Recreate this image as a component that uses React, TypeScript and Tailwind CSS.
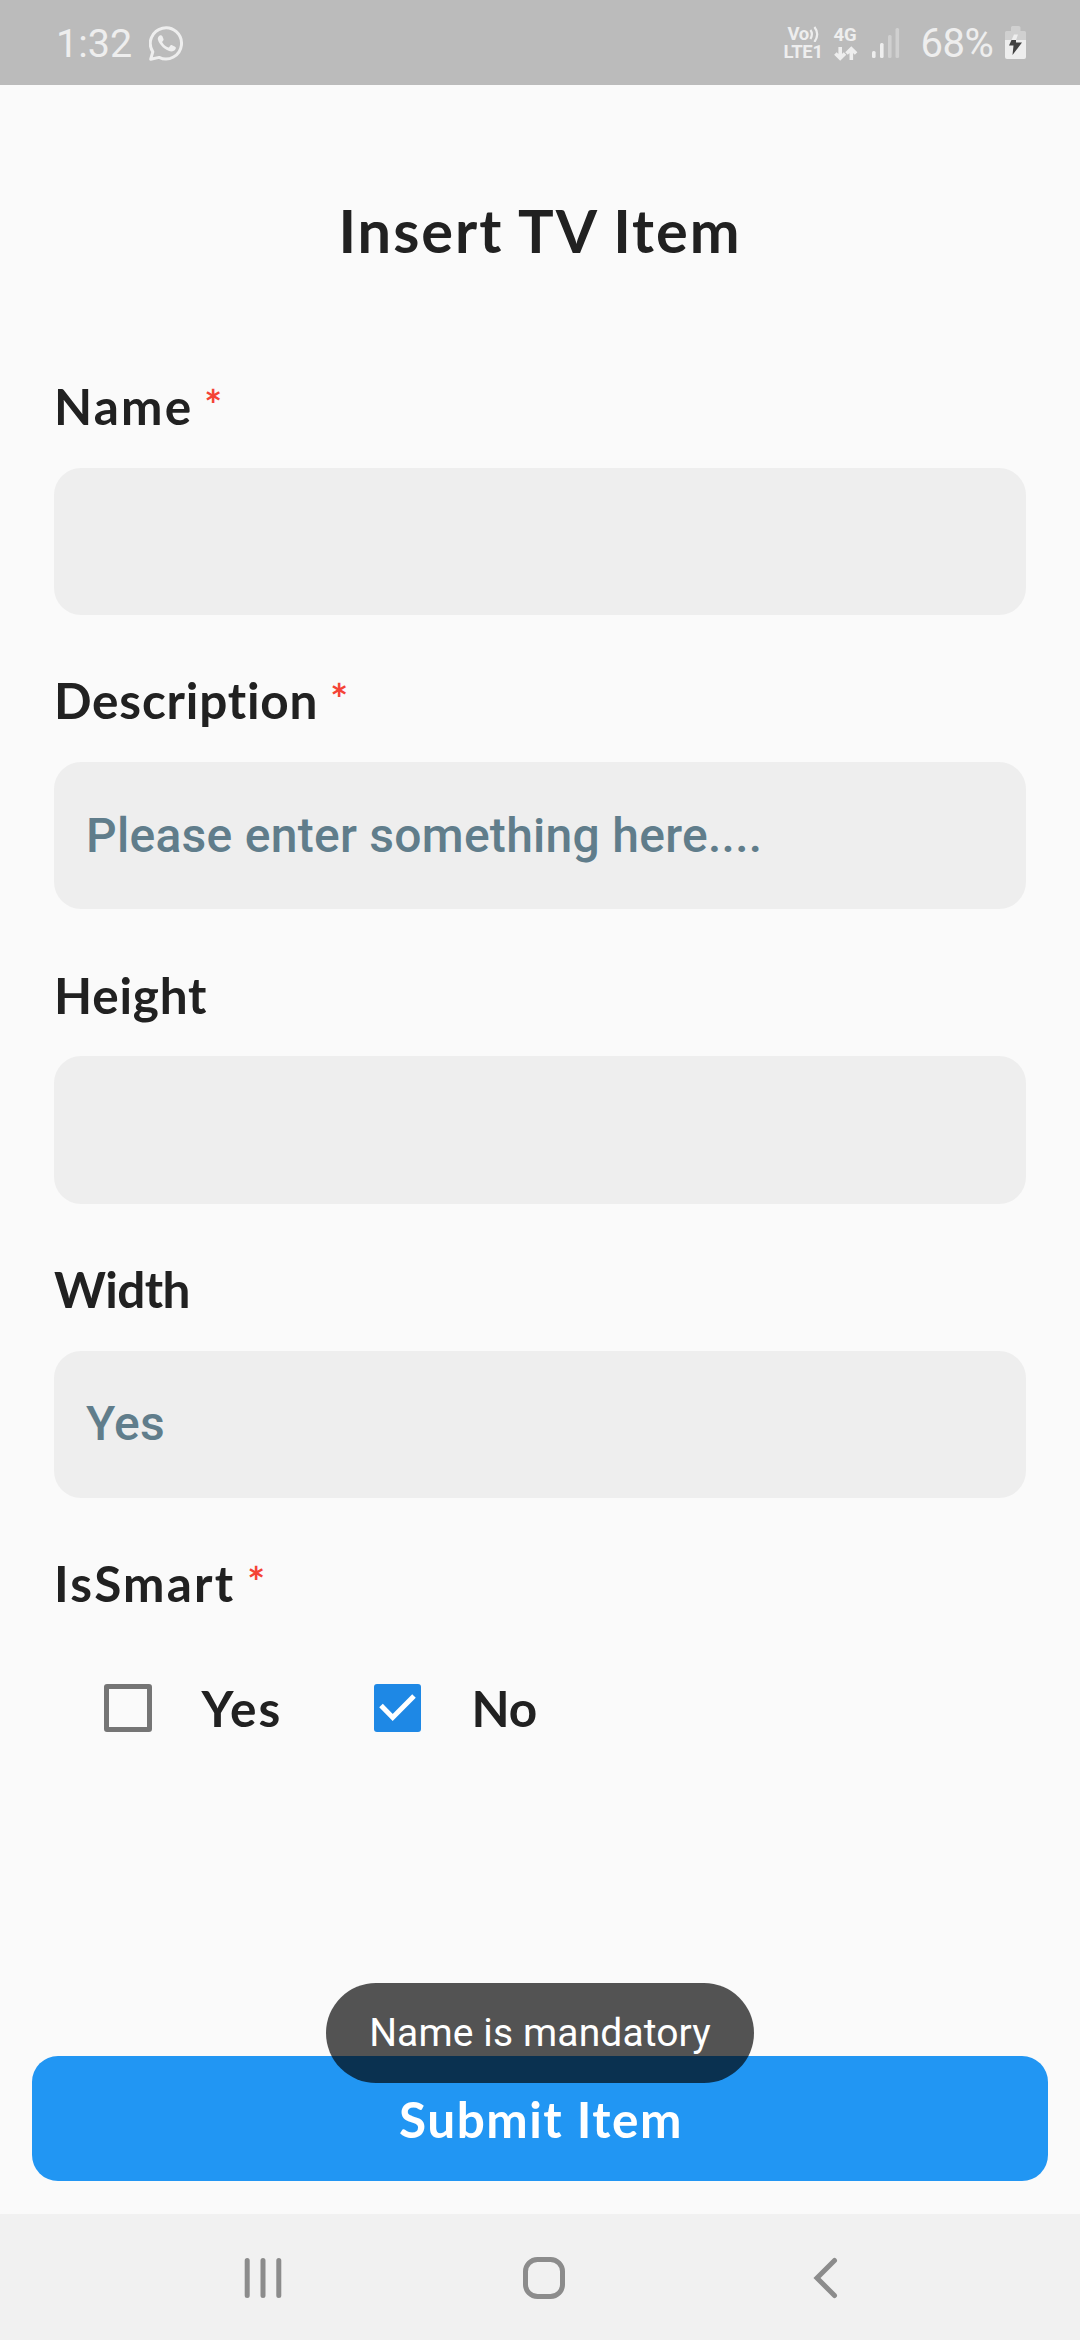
import React from "react";

type FieldProps = {
  label: string;
  required?: boolean;
  value?: string;
  spacing: string;
  starGap?: string;
};

const labelFont =
  "font-['Lato',sans-serif] font-bold text-[49.5px] leading-[60px] text-[#212121] whitespace-pre [font-variant-ligatures:none]";

function Label({ label, required, spacing, starGap }: FieldProps) {
  return (
    <div className="flex h-[60px] items-start">
      <span className={`${labelFont} ${spacing}`}>{label}</span>
      {required && <Star gap={starGap ?? ""} />}
    </div>
  );
}

function Star({ gap }: { gap: string }) {
  return (
    <span
      className={`font-['Lato',sans-serif] text-[42px] font-bold leading-[59px] text-[#f44336] ${gap}`}
    >
      *
    </span>
  );
}

function Field(props: FieldProps) {
  return (
    <div className="flex h-[294.3px] flex-col">
      <Label {...props} />
      <div className="mt-[31.7px] flex h-[147.3px] items-center rounded-[27px] bg-[#eeeeee] pl-8">
        <span className="font-['Roboto',sans-serif] text-[48px] font-medium leading-[56px] tracking-[0.27px] text-[#607d8b]">
          {props.value}
        </span>
      </div>
    </div>
  );
}

function WhatsApp() {
  return (
    <svg width="35" height="35" viewBox="0 0 35 35" fill="none">
      <path
        d="M1.7 33.2 3.8 25.8A15.6 15.6 0 1 1 10.1 31.4Z"
        stroke="#eeeeee"
        strokeWidth="3"
        strokeLinejoin="round"
      />
      <path
        d="M10.7 9.4c1.1-.5 2.2-.2 2.7.8l1.1 2.8c.3.8-.2 1.5-.9 2.3-.5.6-.5.9-.1 1.5 1.3 2 3.1 3.5 5.3 4.5.6.3 1 .2 1.5-.4l1.1-1.4c.5-.6 1-.6 1.7-.3l3 1.5c.9.5.9 1 .6 2-.6 1.8-2.6 2.8-4.4 2.8-5.5-.4-12.5-6.9-13.5-12.2-.2-1.5.5-3.2 1.9-3.9Z"
        fill="#eeeeee"
      />
    </svg>
  );
}

function StatusBar() {
  return (
    <header className="flex h-[84.7px] shrink-0 items-start bg-[#bbbbbb] font-['Roboto',sans-serif] text-[#eeeeee]">
      <span className="ml-[56px] mt-[20px] w-[92.5px] text-[39.5px] leading-[48px]">1:32</span>
      <div className="mt-[26px]">
        <WhatsApp />
      </div>
      <div className="ml-[600px] mt-[25px] flex w-[41px] flex-col text-[18.5px] font-bold leading-[18px]">
        <div className="flex h-[17px] items-start pl-[4px]">
          <span className="tracking-[-0.5px]">Vo</span>
          <svg width="12" height="17" viewBox="0 0 12 17" fill="none" stroke="#eeeeee" strokeWidth="2.2">
            <path d="M1.4 5q3 4 0 9M5.4 2q5.6 7 0 15" />
          </svg>
        </div>
        <span className="mt-[1px] tracking-[-0.3px]">LTE1</span>
      </div>
      <div className="ml-[9px] mt-[26px] flex w-[25px] flex-col text-[18.5px] font-bold leading-[18px]">
        <span>4G</span>
        <svg className="mt-[2px]" width="24" height="15" viewBox="0 0 24 15" fill="none" stroke="#eeeeee" strokeWidth="3.6">
          <path d="M6.2 1v11M1.4 7.5l4.8 4.8L11 7.5M17.3 14V3M12.5 7.5 17.3 2.7l4.8 4.8" />
        </svg>
      </div>
      <svg className="ml-[12px] mt-[27px]" width="30" height="32" viewBox="0 0 30 32">
        <rect x="1" y="24" width="3.6" height="7" rx="1.5" fill="#eeeeee" />
        <rect x="9" y="16" width="3.6" height="15" rx="1.5" fill="#eeeeee" />
        <rect x="17" y="8" width="3.6" height="23" rx="1.5" fill="#d0d0d0" />
        <rect x="24.5" y="1" width="3.6" height="30" rx="1.5" fill="#d0d0d0" />
      </svg>
      <span className="ml-[20px] mt-[20px] w-[84px] text-[40px] leading-[48px] tracking-[-0.5px]">68%</span>
      <svg width="22" height="34" viewBox="0 0 22 34" className="mt-[26px]">
        <path d="M6 5V1.5Q6 0 7.5 0h6Q15.5 0 15.5 1.5V5H19.5Q21 5 21 6.5V14H0V6.5Q0 5 1.5 5Z" fill="#d0d0d0" />
        <path d="M0 14h21v17q0 2-2 2H2q-2 0-2-2Z" fill="#eeeeee" />
        <path d="M9 8.5h4L11 14H6.5Z" fill="#eeeeee" />
        <path d="M6.5 14H11v2.5h6L7.5 29l1-9.5H4Z" fill="#424242" />
      </svg>
    </header>
  );
}

export default function App() {
  return (
    <div className="flex h-[2340px] w-[1080px] flex-col overflow-hidden bg-[#fafafa]">
      <StatusBar />
      <main className="relative flex h-[2129px] flex-col">
        <h1 className="mt-[109.3px] h-[72px] text-center font-['Lato',sans-serif] text-[59.5px] font-bold leading-[72px] tracking-[2px] text-[#212121]">
          Insert TV Item
        </h1>
        <form className="mt-[110px] flex flex-col px-[54px]">
          <Field label="Name" required spacing="tracking-[2.2px]" starGap="ml-[11px]" />
          <Field
            label="Description"
            required
            spacing="tracking-[0.8px]"
            starGap="ml-[12px]"
            value="Please enter something here...."
          />
          <Field label="Height" spacing="tracking-[0.8px]" />
          <Field label="Width" spacing="tracking-[-0.6px]" value="Yes" />
          <Label label="IsSmart" required spacing="tracking-[2.2px]" starGap="ml-[12px]" />
          <div className="mt-[65px] flex h-[60px] items-start pl-[50px]">
            <div className="mt-[6px] size-[47.5px] rounded-[3px] border-[5px] border-[#757575]" />
            <span className={`${labelFont} ml-[50px] w-[172px] tracking-[2px]`}>Yes</span>
            <div className="mt-[6px] size-[47.5px] rounded-[3px] bg-[#1e88e5]">
              <svg width="47.5" height="47.5" viewBox="0 0 47.5 47.5" fill="none">
                <path d="M7 21.5 18.7 33.5 40 12" stroke="#ffffff" strokeWidth="5" />
              </svg>
            </div>
            <span className={`${labelFont} ml-[50.5px]`}>No</span>
          </div>
        </form>
        <button className="mx-[32.4px] mb-[32.4px] mt-auto flex h-[125px] shrink-0 items-center justify-center rounded-[26px] bg-[#2196f3] pl-[2px] font-['Lato',sans-serif] text-[49.5px] font-bold leading-[60px] tracking-[1.5px] text-white">
          Submit Item
        </button>
        <div className="absolute left-[326px] top-[1898.3px] flex h-[99.7px] w-[428px] items-center justify-center rounded-full bg-black/[0.67] font-['Roboto',sans-serif] text-[39px] leading-[48px] tracking-[0.12px] text-white">
          Name is mandatory
        </div>
      </main>
      <nav className="flex flex-1 items-start bg-[#f1f1f1] pt-[42px]">
        <svg className="ml-[244px]" width="38" height="44" viewBox="0 0 38 44" stroke="#8c8c8c" strokeWidth="5" strokeLinecap="round">
          <path d="M3.2 4.5v35M19 4.5v35M34.8 4.5v35" />
        </svg>
        <svg className="ml-[240px]" width="44" height="44" viewBox="0 0 44 44" fill="none" stroke="#8c8c8c" strokeWidth="5">
          <rect x="3.5" y="3.5" width="37" height="37" rx="12" />
        </svg>
        <svg className="ml-[246px]" width="28" height="44" viewBox="0 0 28 44" fill="none" stroke="#8c8c8c" strokeWidth="5" strokeLinecap="round">
          <path d="M22.5 4.5 5 22l17.5 17.5" />
        </svg>
      </nav>
    </div>
  );
}
